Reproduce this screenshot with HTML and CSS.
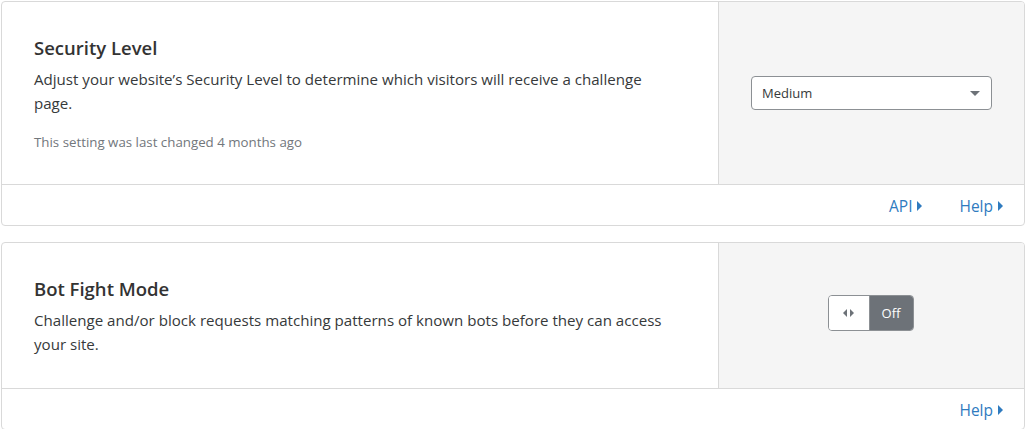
FILE: index.html
```html
<!DOCTYPE html>
<html>
<head>
<meta charset="utf-8">
<link rel="stylesheet" href="styles.css">
</head>
<body>
<div class="page">
  <section class="card">
    <div class="card-body">
      <div class="card-main">
        <h2 class="card-title">Security Level</h2>
        <p class="card-desc">Adjust your website’s Security Level to determine which visitors will receive a challenge page.</p>
        <p class="card-meta">This setting was last changed 4 months ago</p>
      </div>
      <div class="card-control">
        <div class="select">
          <span class="select-value">Medium</span>
          <span class="select-caret"></span>
        </div>
      </div>
    </div>
    <div class="card-footer">
      <a class="link">API<span class="tri"></span></a>
      <a class="link">Help<span class="tri"></span></a>
    </div>
  </section>
  <section class="card">
    <div class="card-body">
      <div class="card-main">
        <h2 class="card-title">Bot Fight Mode</h2>
        <p class="card-desc">Challenge and/or block requests matching patterns of known bots before they can access your site.</p>
      </div>
      <div class="card-control">
        <div class="toggle">
          <span class="toggle-knob"><span class="tl"></span><span class="tr"></span></span>
          <span class="toggle-label">Off</span>
        </div>
      </div>
    </div>
    <div class="card-footer">
      <a class="link">Help<span class="tri"></span></a>
    </div>
  </section>
</div>
</body>
</html>
```
FILE: styles.css
```css
* { box-sizing: border-box; }
html, body { margin: 0; padding: 0; background: #fff; }
body { font-family: "Open Sans", "Noto Sans", sans-serif; color: #36393a; }
.page { padding: 1px 1px 0 1px; display: flex; flex-direction: column; gap: 16px; }
.card { border: 1px solid #d9d9d9; border-radius: 4px; overflow: hidden; background: #fff; }
.card-body { display: flex; border-bottom: 1px solid #d9d9d9; }
.card-main { flex: 0 0 717px; padding: 33px 44px 32px 32px; border-right: 1px solid #d9d9d9; }
.card-title { margin: 0 0 6px 0; font-size: 18.5px; font-weight: 600; line-height: 26px; color: #333; }
.card-desc { margin: 0; font-size: 15.1px; line-height: 24px; color: #36393a; }
.card-meta { margin: 17px 0 0 0; font-size: 13.3px; line-height: 20px; color: #72777c; }
.card-control { flex: 1; background: #f5f5f5; display: flex; align-items: center; justify-content: center; }
.select { width: 241px; height: 34px; border: 1px solid #8c9094; border-radius: 4px; background: #fff; display: flex; align-items: center; justify-content: space-between; padding: 0 11px 0 10px; }
.select-value { font-size: 13px; color: #36393a; }
.select-caret { width: 0; height: 0; border-left: 5px solid transparent; border-right: 5px solid transparent; border-top: 5px solid #6d7278; }
.toggle { display: flex; height: 36px; border: 1px solid #8c9094; border-radius: 4px; overflow: hidden; margin: -5px 2px 0 0; }
.toggle-knob { width: 41px; background: #fff; display: flex; align-items: center; justify-content: center; gap: 3px; border-right: 1px solid #8c9094; }
.tl { width: 0; height: 0; border-top: 4px solid transparent; border-bottom: 4px solid transparent; border-right: 4px solid #6d7278; }
.tr { width: 0; height: 0; border-top: 4px solid transparent; border-bottom: 4px solid transparent; border-left: 4px solid #6d7278; }
.toggle-label { width: 43px; background: #6d7278; color: #fff; font-size: 13px; display: flex; align-items: center; justify-content: center; }
.card-footer { height: 40px; display: flex; justify-content: flex-end; align-items: center; gap: 37px; padding: 2px 21px 0 0; }
.link { color: #2f7bbf; font-size: 15.5px; display: inline-flex; align-items: center; cursor: pointer; }
.tri { display: inline-block; width: 0; height: 0; margin-left: 5px; border-top: 5px solid transparent; border-bottom: 5px solid transparent; border-left: 5px solid #2f7bbf; }
```
